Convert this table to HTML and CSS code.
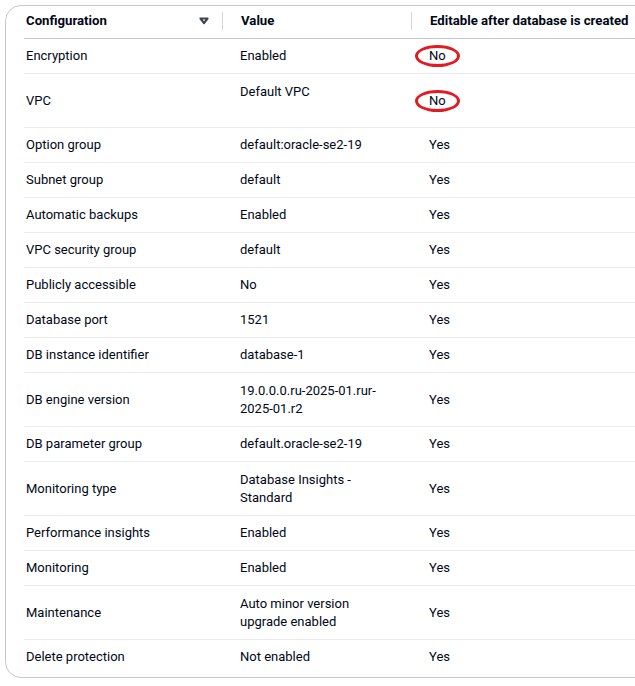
FILE: index.html
```html
<!DOCTYPE html>
<html>
<head>
<meta charset="utf-8">
<link rel="stylesheet" href="styles.css">
</head>
<body>
<div class="card">
  <table class="tbl">
    <colgroup><col class="c1"><col class="c2"><col class="c3"></colgroup>
    <thead>
      <tr>
        <th class="h1"><div class="hcell"><span>Configuration</span><svg class="sort" width="12" height="8" viewBox="0 0 12 8"><path d="M2.5 1.5 H9.5 L6 6.2 Z" fill="#ffffff" stroke="#424650" stroke-width="2.2" stroke-linejoin="round"/></svg></div></th>
        <th><div class="hcell sep">Value</div></th>
        <th><div class="hcell sep">Editable after database is created</div></th>
      </tr>
    </thead>
    <tbody>
      <tr><td>Encryption</td><td>Enabled</td><td><span class="circ">No</span></td></tr>
      <tr class="two"><td>VPC</td><td class="top">Default VPC<br>&nbsp;</td><td><span class="circ">No</span></td></tr>
      <tr><td>Option group</td><td>default:oracle-se2-19</td><td>Yes</td></tr>
      <tr><td>Subnet group</td><td>default</td><td>Yes</td></tr>
      <tr><td>Automatic backups</td><td>Enabled</td><td>Yes</td></tr>
      <tr><td>VPC security group</td><td>default</td><td>Yes</td></tr>
      <tr><td>Publicly accessible</td><td>No</td><td>Yes</td></tr>
      <tr><td>Database port</td><td>1521</td><td>Yes</td></tr>
      <tr><td>DB instance identifier</td><td>database-1</td><td>Yes</td></tr>
      <tr class="two"><td>DB engine version</td><td>19.0.0.0.ru-2025-01.rur-<br>2025-01.r2</td><td>Yes</td></tr>
      <tr><td>DB parameter group</td><td>default.oracle-se2-19</td><td>Yes</td></tr>
      <tr class="two"><td>Monitoring type</td><td>Database Insights -<br>Standard</td><td>Yes</td></tr>
      <tr><td>Performance insights</td><td>Enabled</td><td>Yes</td></tr>
      <tr><td>Monitoring</td><td>Enabled</td><td>Yes</td></tr>
      <tr class="two"><td>Maintenance</td><td>Auto minor version<br>upgrade enabled</td><td>Yes</td></tr>
      <tr class="last"><td>Delete protection</td><td>Not enabled</td><td>Yes</td></tr>
    </tbody>
  </table>
</div>
</body>
</html>
```
FILE: styles.css
```css
html, body {
  margin: 0;
  padding: 0;
  background: #ffffff;
  overflow: hidden;
}
body {
  font-family: Roboto, "Liberation Sans", sans-serif;
  font-size: 13px;
  line-height: 18px;
  color: #000716;
}
.card {
  margin: 5px 0 0 5px;
  width: 680px;
  border: 1px solid #c6c6cd;
  border-radius: 16px;
  padding: 0 0 3px 18px;
  box-sizing: border-box;
}
.tbl {
  border-collapse: collapse;
  table-layout: fixed;
  width: 650px;
}
.c1 { width: 198px; }
.c2 { width: 189px; }
.c3 { width: 263px; }
th {
  font-weight: 700;
  font-size: 13.2px;
  text-align: left;
  padding: 6px 0 8px 0;
  border-bottom: 1px solid #c6c6cd;
}
.hcell {
  display: flex;
  align-items: center;
  height: 18px;
  padding-left: 18px;
}
.h1 .hcell {
  padding-left: 2px;
  padding-right: 12px;
  justify-content: space-between;
}
.hcell.sep {
  border-left: 1px solid #d1d5db;
}
.sort { display: block; }
td {
  padding: 8px 0 8px 18px;
  border-bottom: 1px solid #e9ebed;
  vertical-align: middle;
}
tr.two td {
  padding-top: 8.5px;
  padding-bottom: 8.5px;
}
td:first-child { padding-left: 2px; }
td.top { vertical-align: top; }
tr.last td { border-bottom: none; }
.circ {
  position: relative;
  display: inline-block;
}
.circ::after {
  content: "";
  position: absolute;
  left: -14px;
  top: -2px;
  width: 39px;
  height: 16px;
  border: 3.5px solid #e21b22;
  border-radius: 50%;
}
```
